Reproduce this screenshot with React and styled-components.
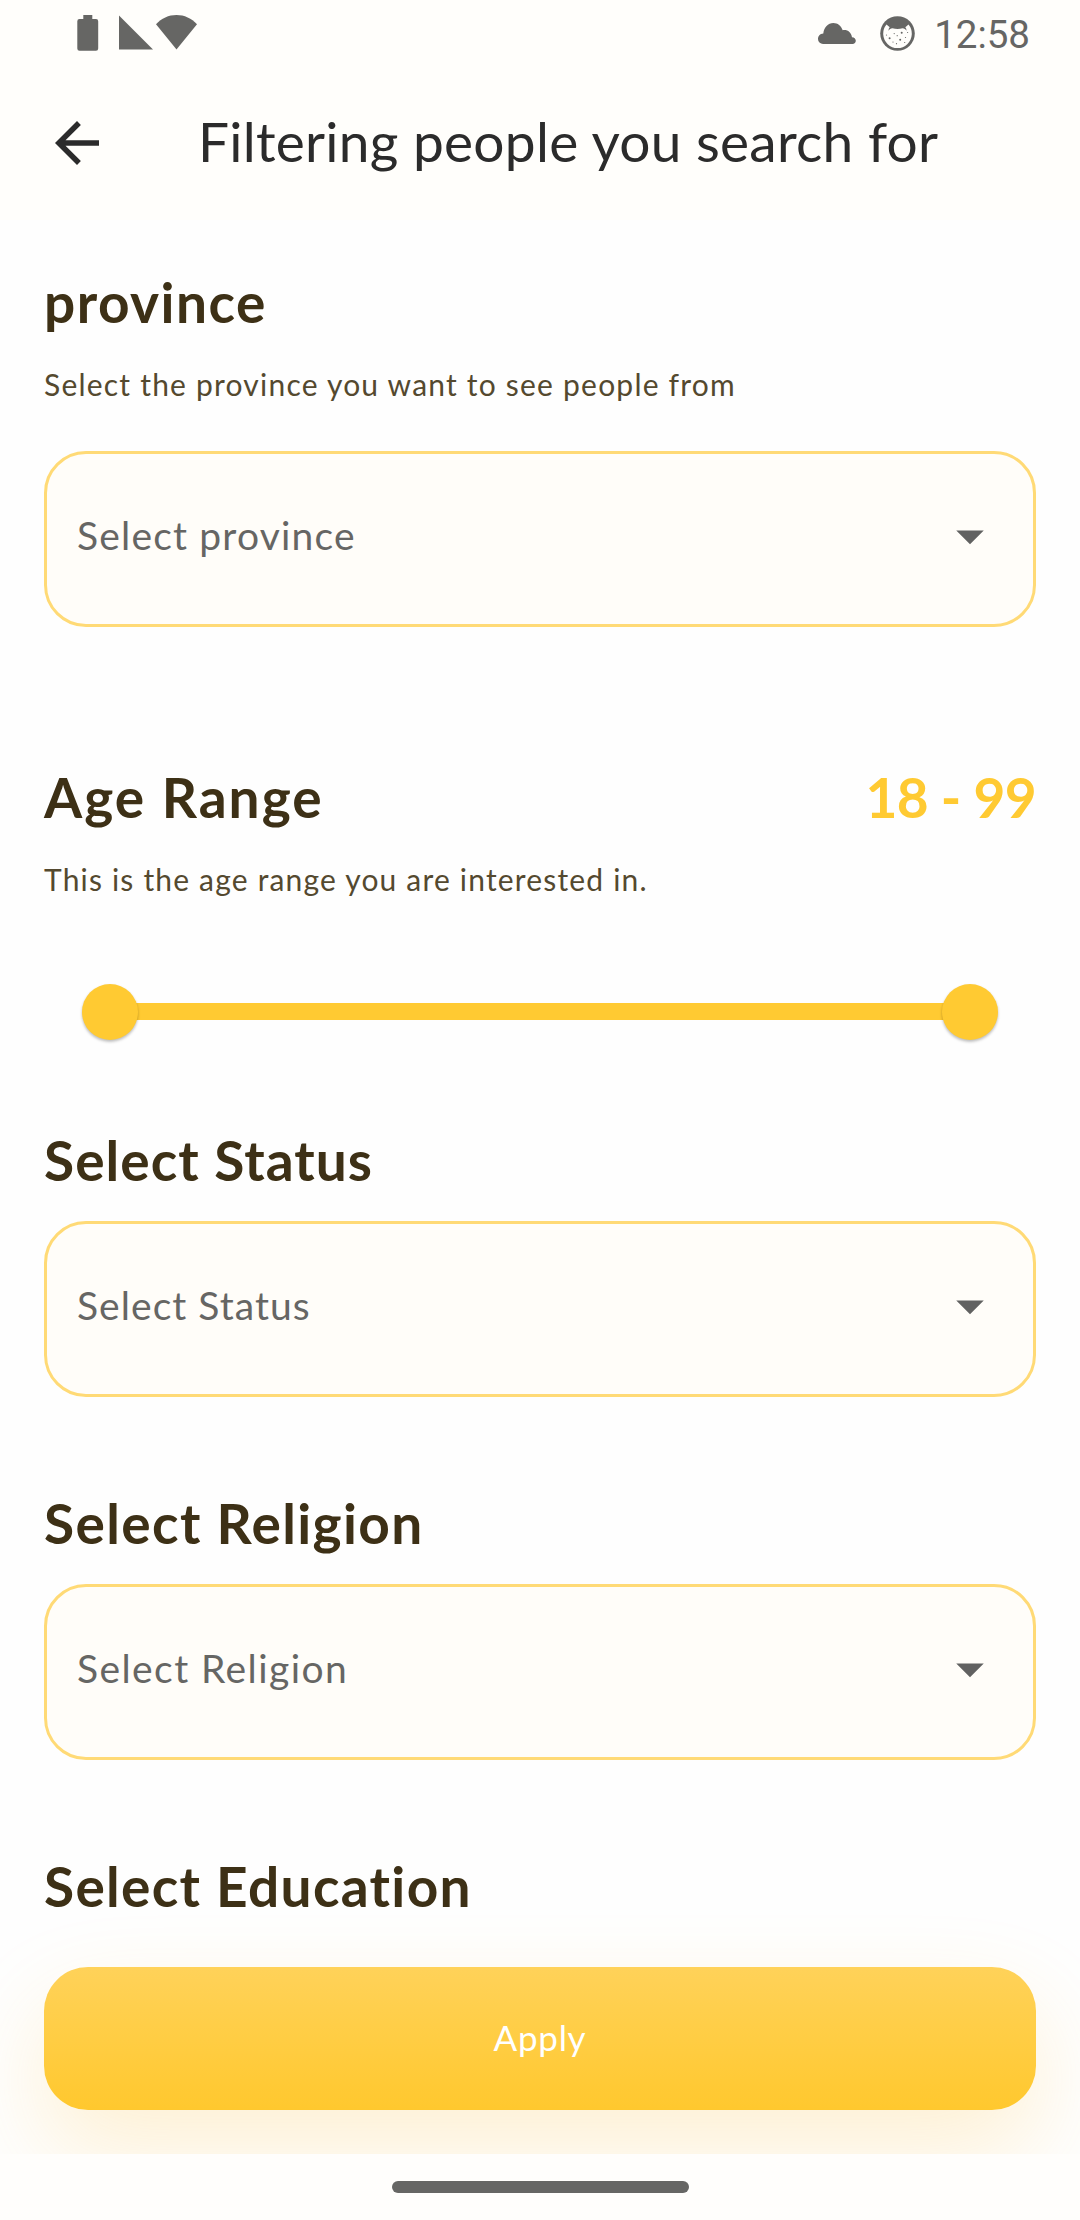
import React from "react"
import { useState } from "react"
import styled, { createGlobalStyle } from "styled-components"

const selects = [
  { id: "status", label: "Select Status", spacing: 1.05, hintSpacing: 1.05 },
  { id: "religion", label: "Select Religion", spacing: 1.38, hintSpacing: 1.42 },
]

// Status bar icons
function BatteryIcon() {
  return (
    <svg width="22" height="36" viewBox="0 0 22 36" fill="currentColor">
      <path d="M6.3 0h9v4h3.7a2.2 2.2 0 0 1 2.2 2.2v27.3a2.2 2.2 0 0 1-2.2 2.2H2.5a2.2 2.2 0 0 1-2.2-2.2V6.2A2.2 2.2 0 0 1 2.5 4h3.8z" />
    </svg>
  )
}

function SignalIcon() {
  return (
    <svg width="34" height="35" viewBox="0 0 34 35" fill="currentColor">
      <path d="M0 .5v34h34z" />
    </svg>
  )
}

function WifiIcon() {
  return (
    <svg width="41" height="35" viewBox="0 0 41 35" fill="currentColor">
      <path d="M20.5 34.5 41 9.3C35.6 3.3 28.3 0 20.5 0S5.4 3.3 0 9.3z" />
    </svg>
  )
}

function CloudIcon() {
  return (
    <svg width="38" height="21" viewBox="0 0 38 21" fill="currentColor">
      <path d="M5 21a5 5 0 0 1-5-5c0-3 2-5.3 5.3-5.5C6 4.5 10 0 15.4 0c4.300 0 7.800 2.800 9.300 7.200 4.800-.8 8.500 2 9.300 7 2.200.2 3.800 1.600 3.800 3.500 0 1.900-1.400 3.300-3.300 3.300z" />
    </svg>
  )
}

function CatIcon() {
  return (
    <svg width="35" height="35" viewBox="0 0 35 35">
      <circle cx="17.5" cy="17.5" r="17.3" fill="currentColor" />
      <path
        d="M6.5 8.6c1.3 1.2 2.2 2 3.2 2.6-.9 1-1.3 2.2-1.2 3.6.9-1.500 2.200-2.300 4-2.500 3.300.9 6.800.9 10 0 1.800.2 3.100 1 4 2.500.1-1.400-.3-2.600-1.200-3.600 1-.6 1.900-1.400 3.200-2.600A14.300 14.300 0 1 1 6.500 8.600z"
        fill="#fffefb"
      />
      <g fill="currentColor">
        <circle cx="9.6" cy="22.2" r="1" />
        <circle cx="21.7" cy="16.8" r="1" />
        <circle cx="20.2" cy="23.8" r="1" />
        <circle cx="14.2" cy="17.6" r=".6" />
        <circle cx="17.2" cy="19.7" r=".6" />
        <circle cx="6.5" cy="19" r=".6" />
        <circle cx="13" cy="26" r=".6" />
        <circle cx="16.5" cy="27.7" r=".6" />
        <circle cx="25.5" cy="21.5" r=".6" />
        <circle cx="27.6" cy="16.5" r=".6" />
        <circle cx="24.7" cy="26.5" r=".6" />
      </g>
    </svg>
  )
}

function BackIcon() {
  return (
    <svg width="66" height="66" viewBox="0 0 24 24" fill="currentColor">
      <path d="M20 11H7.83l5.59-5.59L12 4l-8 8 8 8 1.41-1.41L7.83 13H20z" />
    </svg>
  )
}

function Select({ hint, spacing }) {
  return (
    <Field type="button">
      <Hint $spacing={spacing}>{hint}</Hint>
      <svg width="66" height="66" viewBox="0 0 24 24" fill="#616161">
        <path d="m7 10 5 5 5-5z" />
      </svg>
    </Field>
  )
}

export default function App() {
  const [range] = useState([18, 99])

  return (
    <Screen>
      <GlobalStyle />
      <StatusBar>
        <IconGroup>
          <BatteryIcon />
          <SignalPair>
            <SignalIcon />
            <WifiIcon />
          </SignalPair>
        </IconGroup>
        <NoticeGroup>
          <CloudIcon />
          <CatIcon />
          <Clock>12:58</Clock>
        </NoticeGroup>
      </StatusBar>

      <AppBar>
        <BackButton aria-label="Back">
          <BackIcon />
        </BackButton>
        <Title>Filtering people you search for</Title>
      </AppBar>

      <Body>
        {/* Province */}
        <Section $gap={136}>
          <Heading $spacing={1.47}>province</Heading>
          <Description $spacing={1.21}>Select the province you want to see people from</Description>
          <Select hint="Select province" spacing={1.18} />
        </Section>

        {/* Age range with slider */}
        <Section $gap={87}>
          <HeadingRow>
            <Heading $spacing={2.05}>Age Range</Heading>
            <RangeValue>{range[0]} - {range[1]}</RangeValue>
          </HeadingRow>
          <Description $spacing={1.18}>This is the age range you are interested in.</Description>
          <Slider>
            <Knob />
            <Track />
            <Knob />
          </Slider>
        </Section>

        {selects.map((item) => (
          <Section key={item.id} $gap={92}>
            <Heading $spacing={item.spacing} $tight>{item.label}</Heading>
            <Select hint={item.label} spacing={item.hintSpacing} />
          </Section>
        ))}

        <Heading $spacing={1.32}>Select Education</Heading>

        <ApplyButton>Apply</ApplyButton>
      </Body>

      <NavBar>
        <HomeHandle />
      </NavBar>
    </Screen>
  )
}

// Styled-Components CSS
const GlobalStyle = createGlobalStyle`
  * {
    box-sizing: border-box;
  }

  body {
    margin: 0;
    background: #fefefe;
    font-family: Lato, "Liberation Sans", sans-serif;
  }

  svg {
    display: block;
    flex-shrink: 0;
  }

  button {
    border: none;
    padding: 0;
    font-family: inherit;
  }
`
const Screen = styled.div`
  display: flex;
  flex-direction: column;
  width: 1080px;
  height: 2220px;
  overflow: hidden;
`
const StatusBar = styled.div`
  display: flex;
  justify-content: space-between;
  height: 66px;
  padding: 15px 50px 0 77px;
  background: #fffefb;
  color: #666664;
`
const IconGroup = styled.div`
  display: flex;
  align-items: flex-start;
  gap: 20px;
`
const SignalPair = styled.div`
  display: flex;
  gap: 3px;
`
const NoticeGroup = styled.div`
  display: flex;
  align-items: center;
  height: 37px;
  gap: 24px;
`
const Clock = styled.span`
  margin-left: -5px;
  padding-top: 2px;
  font-family: Roboto, sans-serif;
  font-size: 38.5px;
  line-height: 36px;
`
const AppBar = styled.header`
  display: flex;
  align-items: center;
  height: 154px;
  padding-left: 44px;
  background: #fffefb;
  color: #2b2b2b;
`
const BackButton = styled.button`
  background: none;
  color: inherit;
`
const Title = styled.h1`
  margin: 0 0 0 88px;
  padding-bottom: 4px;
  font-size: 55px;
  font-weight: 400;
  line-height: 66px;
  letter-spacing: 0.26px;
  white-space: nowrap;
`
const Body = styled.main`
  position: relative;
  flex: 1;
  overflow: hidden;
  padding: 48px 44px 0;
`
const Section = styled.section`
  display: flex;
  flex-direction: column;
  margin-bottom: ${(props) => props.$gap}px;
`
const HeadingRow = styled.div`
  display: flex;
  align-items: flex-end;
  justify-content: space-between;
`
const Heading = styled.h2`
  margin: 0 0 ${(props) => (props.$tight ? 28 : 0)}px;
  padding-top: 1px;
  color: #3d3016;
  font-size: 55px;
  font-weight: 700;
  line-height: 66px;
  letter-spacing: ${(props) => props.$spacing}px;
`
const RangeValue = styled.span`
  color: #ffca32;
  font-size: 55px;
  font-weight: 700;
  line-height: 66px;
  letter-spacing: -0.62px;
`
const Description = styled.p`
  margin: 31px 0 49px;
  color: #54492f;
  font-size: 30px;
  line-height: 36px;
  letter-spacing: ${(props) => props.$spacing}px;
`
const Field = styled.button`
  display: flex;
  align-items: center;
  justify-content: space-between;
  width: 100%;
  height: 176px;
  padding: 0 30px 7px;
  border: 3px solid #ffda76;
  border-radius: 42px;
  background: #fffdf9;
`
const Hint = styled.span`
  padding-bottom: 1px;
  color: #666664;
  font-size: 39px;
  line-height: 48px;
  letter-spacing: ${(props) => props.$spacing}px;
`
const Slider = styled.div`
  display: flex;
  align-items: center;
  height: 55px;
  margin: 38px 38px 0;
`
const Knob = styled.div`
  position: relative;
  flex-shrink: 0;
  width: 56px;
  height: 56px;
  border-radius: 50%;
  background: #ffca32;
  box-shadow: 0 2px 3px rgba(0, 0, 0, 0.22), 0 1px 3px rgba(0, 0, 0, 0.06);
`
const Track = styled.div`
  flex: 1;
  height: 17px;
  margin: 0 -4px;
  background: #ffca32;
`
const ApplyButton = styled.button`
  position: absolute;
  right: 44px;
  bottom: 44px;
  left: 44px;
  height: 143px;
  padding-bottom: 3px;
  border-radius: 44px;
  background: linear-gradient(#ffd259, #ffc82e);
  box-shadow: 0 41px 96px rgba(255, 186, 40, 0.2);
  color: #fff;
  font-size: 35px;
  letter-spacing: 0.72px;
`
const NavBar = styled.footer`
  display: flex;
  justify-content: center;
  height: 66px;
  padding-top: 27px;
  background: #fffefc;
`
const HomeHandle = styled.div`
  width: 297px;
  height: 12px;
  border-radius: 6px;
  background: #666664;
`
